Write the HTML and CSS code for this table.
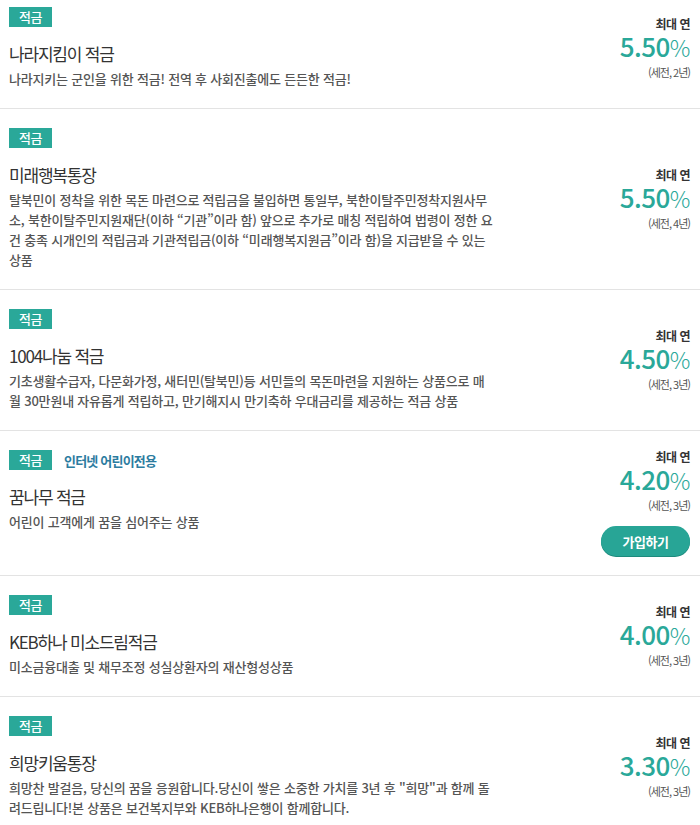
FILE: index.html
```html
<!DOCTYPE html>
<html lang="ko">
<head>
  <meta charset="UTF-8">
  <title>적금 상품 목록</title>
  <link rel="stylesheet" href="styles.css">
</head>
<body>
<ul class="product-list">
  <li class="product">
    <div class="product-info">
      <div class="product-tags"><span class="badge">적금</span></div>
      <h3 class="product-name">나라지킴이 적금</h3>
      <p class="product-desc">나라지키는 군인을 위한 적금! 전역 후 사회진출에도 든든한 적금!</p>
    </div>
    <div class="product-rate">
      <span class="rate-label">최대 연</span>
      <span class="rate-value">5.50<em>%</em></span>
      <span class="rate-term">(세전, 2년)</span>
    </div>
  </li>
  <li class="product">
    <div class="product-info">
      <div class="product-tags"><span class="badge">적금</span></div>
      <h3 class="product-name">미래행복통장</h3>
      <p class="product-desc">탈북민이 정착을 위한 목돈 마련으로 적립금을 불입하면 통일부, 북한이탈주민정착지원사무소, 북한이탈주민지원재단(이하 “기관”이라 함) 앞으로 추가로 매칭 적립하여 법령이 정한 요건 충족 시개인의 적립금과 기관적립금(이하 “미래행복지원금”이라 함)을 지급받을 수 있는 상품</p>
    </div>
    <div class="product-rate">
      <span class="rate-label">최대 연</span>
      <span class="rate-value">5.50<em>%</em></span>
      <span class="rate-term">(세전, 4년)</span>
    </div>
  </li>
  <li class="product">
    <div class="product-info">
      <div class="product-tags"><span class="badge">적금</span></div>
      <h3 class="product-name">1004나눔 적금</h3>
      <p class="product-desc">기초생활수급자, 다문화가정, 새터민(탈북민)등 서민들의 목돈마련을 지원하는 상품으로 매월 30만원내 자유롭게 적립하고, 만기해지시 만기축하 우대금리를 제공하는 적금 상품</p>
    </div>
    <div class="product-rate">
      <span class="rate-label">최대 연</span>
      <span class="rate-value">4.50<em>%</em></span>
      <span class="rate-term">(세전, 3년)</span>
    </div>
  </li>
  <li class="product">
    <div class="product-info">
      <div class="product-tags"><span class="badge">적금</span><span class="tag-note">인터넷 어린이전용</span></div>
      <h3 class="product-name">꿈나무 적금</h3>
      <p class="product-desc">어린이 고객에게 꿈을 심어주는 상품</p>
    </div>
    <div class="product-rate">
      <span class="rate-label">최대 연</span>
      <span class="rate-value">4.20<em>%</em></span>
      <span class="rate-term">(세전, 3년)</span>
      <button class="join-btn" type="button">가입하기</button>
    </div>
  </li>
  <li class="product">
    <div class="product-info">
      <div class="product-tags"><span class="badge">적금</span></div>
      <h3 class="product-name">KEB하나 미소드림적금</h3>
      <p class="product-desc">미소금융대출 및 채무조정 성실상환자의 재산형성상품</p>
    </div>
    <div class="product-rate">
      <span class="rate-label">최대 연</span>
      <span class="rate-value">4.00<em>%</em></span>
      <span class="rate-term">(세전, 3년)</span>
    </div>
  </li>
  <li class="product">
    <div class="product-info">
      <div class="product-tags"><span class="badge">적금</span></div>
      <h3 class="product-name">희망키움통장</h3>
      <p class="product-desc">희망찬 발걸음, 당신의 꿈을 응원합니다.당신이 쌓은 소중한 가치를 3년 후 "희망"과 함께 돌려드립니다!본 상품은 보건복지부와 KEB하나은행이 함께합니다.</p>
    </div>
    <div class="product-rate">
      <span class="rate-label">최대 연</span>
      <span class="rate-value">3.30<em>%</em></span>
      <span class="rate-term">(세전, 3년)</span>
    </div>
  </li>
</ul>
</body>
</html>
```

FILE: styles.css
```css
body {
  margin: 0;
  background: #fff;
  font-family: "Noto Sans CJK KR", "Noto Sans", sans-serif;
  color: #333;
  overflow: hidden;
}

.product-list {
  list-style: none;
  margin: -12px 0 0;
  padding: 0;
}

.product {
  display: flex;
  align-items: center;
  justify-content: space-between;
  padding: 19px 10px 19px 9px;
  border-bottom: 1px solid #e3e3e3;
}

.product-info {
  align-self: flex-start;
  width: 485px;
}

.product-tags {
  display: flex;
  align-items: center;
  height: 20px;
}

.badge {
  display: inline-block;
  width: 43px;
  height: 20px;
  line-height: 20px;
  text-align: center;
  background: #2aa899;
  color: #fff;
  font-size: 13px;
  font-weight: 500;
  letter-spacing: -0.5px;
}

.tag-note {
  margin-left: 12px;
  font-size: 13px;
  font-weight: 700;
  color: #2c7c9f;
  letter-spacing: -0.8px;
}

.product-name {
  margin: 15px 0 0;
  font-size: 17px;
  font-weight: 400;
  line-height: 24px;
  color: #333;
  letter-spacing: -1.2px;
}

.product-desc {
  margin: 3px 0 0;
  font-size: 13px;
  font-weight: 500;
  line-height: 20px;
  color: #555;
  letter-spacing: -0.2px;
}

.product-rate {
  display: flex;
  flex-direction: column;
  align-items: flex-end;
  text-align: right;
}

.rate-label {
  font-size: 12px;
  font-weight: 700;
  line-height: 14px;
  color: #333;
  letter-spacing: -0.5px;
}

.rate-value {
  font-size: 26px;
  font-weight: 500;
  line-height: 30px;
  color: #2aa899;
  letter-spacing: -0.5px;
}

.rate-value em {
  font-style: normal;
  font-weight: 300;
  font-size: 23px;
}

.rate-term {
  margin-top: 2px;
  font-size: 11px;
  line-height: 16px;
  color: #555;
  letter-spacing: -1px;
}

.join-btn {
  margin-top: 13px;
  width: 89px;
  height: 30px;
  border: 0;
  border-radius: 15px;
  background: #28a596;
  box-shadow: 0 1px 0 #1d8a7d;
  color: #fff;
  font-family: inherit;
  font-size: 13px;
  font-weight: 700;
  letter-spacing: -0.5px;
}
```
